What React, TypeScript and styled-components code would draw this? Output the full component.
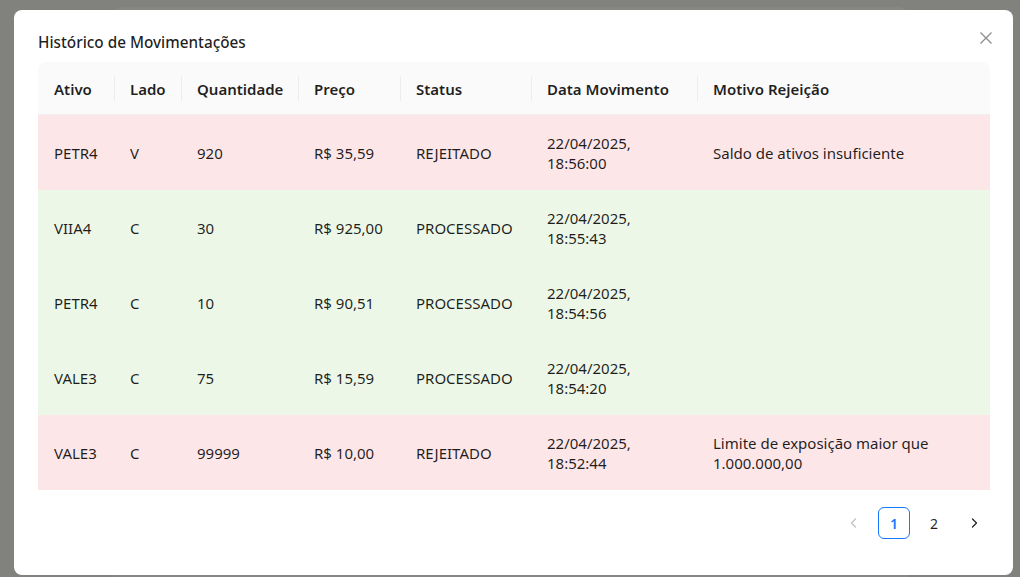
import React from "react";
import styled, { createGlobalStyle } from "styled-components";

const Global = createGlobalStyle`
  html, body { margin: 0; padding: 0; }
  body {
    width: 1020px; height: 577px; overflow: hidden;
    background: #81817d;
    font-family: "Noto Sans", "Open Sans", sans-serif;
  }
`;

const Backdrop = styled.div`
  width: 1020px;
  height: 577px;
  display: flex;
  justify-content: center;
  padding-top: 7px;
  box-sizing: border-box;
`;

const BehindCard = styled.div`
  width: 793px;
  height: 570px;
  border-radius: 8px 8px 0 0;
  background: #868682;
`;

const Modal = styled.div`
  position: fixed;
  left: 14px;
  top: 10px;
  width: 999px;
  height: 565px;
  box-sizing: border-box;
  background: #fff;
  border-radius: 8px;
  padding: 20px 23px 0 24px;
  display: flex;
  flex-direction: column;
  color: rgba(0, 0, 0, 0.88);
`;

const Title = styled.div`
  font-size: 15.3px;
  font-weight: 500;
  line-height: 24px;
  margin-bottom: 8px;
`;

const CloseButton = styled.button`
  position: absolute;
  top: 17px;
  right: 16px;
  width: 22px;
  height: 22px;
  padding: 0;
  border: 0;
  background: transparent;
  display: flex;
  align-items: center;
  justify-content: center;
  color: rgba(0, 0, 0, 0.45);
`;

const Table = styled.div`
  display: grid;
  grid-template-columns: 76px 67px 117px 102px 131px 166px 1fr;
  width: 952px;
  border-radius: 8px 8px 0 0;
  overflow: hidden;
  font-size: 15px;
`;

const HeadCell = styled.div<{ $sep?: boolean }>`
  position: relative;
  height: 53px;
  display: flex;
  align-items: center;
  padding: 1px 16px 0;
  background: #fafafa;
  font-weight: 600;
  border-bottom: 1px solid #f0f0f0;
  box-sizing: border-box;
  white-space: nowrap;
  &::before {
    content: "";
    display: ${(p) => (p.$sep ? "block" : "none")};
    position: absolute;
    left: 0;
    top: 14px;
    height: 25px;
    width: 1px;
    background: #ededed;
  }
`;

const Cell = styled.div<{ $tone: "red" | "green" }>`
  height: 75px;
  box-sizing: border-box;
  display: flex;
  align-items: center;
  padding: 1px 16px 0;
  line-height: 20px;
  white-space: nowrap;
  background: ${(p) => (p.$tone === "red" ? "#fde6e8" : "#edf7e7")};
`;

const Pagination = styled.div`
  display: flex;
  justify-content: flex-end;
  gap: 8px;
  margin-top: 17px;
  width: 952px;
`;

const PageItem = styled.div<{ $active?: boolean; $disabled?: boolean }>`
  width: 32px;
  height: 32px;
  box-sizing: border-box;
  border-radius: 6px;
  display: flex;
  align-items: center;
  justify-content: center;
  font-size: 14px;
  font-weight: ${(p) => (p.$active ? 600 : 400)};
  border: 1px solid ${(p) => (p.$active ? "#1677ff" : "transparent")};
  color: ${(p) =>
    p.$active ? "#1677ff" : p.$disabled ? "rgba(0,0,0,0.25)" : "rgba(0,0,0,0.88)"};
`;

type Row = {
  tone: "red" | "green";
  cells: string[];
};

const headers = [
  "Ativo",
  "Lado",
  "Quantidade",
  "Preço",
  "Status",
  "Data Movimento",
  "Motivo Rejeição",
];

const rows: Row[] = [
  {
    tone: "red",
    cells: ["PETR4", "V", "920", "R$ 35,59", "REJEITADO", "22/04/2025,\n18:56:00", "Saldo de ativos insuficiente"],
  },
  {
    tone: "green",
    cells: ["VIIA4", "C", "30", "R$ 925,00", "PROCESSADO", "22/04/2025,\n18:55:43", ""],
  },
  {
    tone: "green",
    cells: ["PETR4", "C", "10", "R$ 90,51", "PROCESSADO", "22/04/2025,\n18:54:56", ""],
  },
  {
    tone: "green",
    cells: ["VALE3", "C", "75", "R$ 15,59", "PROCESSADO", "22/04/2025,\n18:54:20", ""],
  },
  {
    tone: "red",
    cells: ["VALE3", "C", "99999", "R$ 10,00", "REJEITADO", "22/04/2025,\n18:52:44", "Limite de exposição maior que\n1.000.000,00"],
  },
];

const Lines = styled.span`
  white-space: pre-line;
`;

const Chevron = ({ dir }: { dir: "left" | "right" }) => (
  <svg width="10" height="10" viewBox="0 0 10 10" fill="none">
    <polyline
      points={dir === "left" ? "6.5,1 2.5,5 6.5,9" : "3.5,1 7.5,5 3.5,9"}
      stroke="currentColor"
      strokeWidth="1.2"
      strokeLinecap="round"
      strokeLinejoin="round"
    />
  </svg>
);

export default function App() {
  return (
    <>
      <Global />
      <Backdrop>
        <BehindCard />
      </Backdrop>
      <Modal>
        <CloseButton aria-label="Fechar">
          <svg width="14" height="14" viewBox="0 0 14 14">
            <path d="M1.5 1.5 L12.5 12.5 M12.5 1.5 L1.5 12.5" stroke="currentColor" strokeWidth="1.3" />
          </svg>
        </CloseButton>
        <Title>Histórico de Movimentações</Title>
        <Table>
          {headers.map((h, i) => (
            <HeadCell key={h} $sep={i > 0}>
              {h}
            </HeadCell>
          ))}
          {rows.map((r, ri) =>
            r.cells.map((c, ci) => (
              <Cell key={`${ri}-${ci}`} $tone={r.tone}>
                <Lines>{c}</Lines>
              </Cell>
            ))
          )}
        </Table>
        <Pagination>
          <PageItem $disabled>
            <Chevron dir="left" />
          </PageItem>
          <PageItem $active>1</PageItem>
          <PageItem>2</PageItem>
          <PageItem>
            <Chevron dir="right" />
          </PageItem>
        </Pagination>
      </Modal>
    </>
  );
}
